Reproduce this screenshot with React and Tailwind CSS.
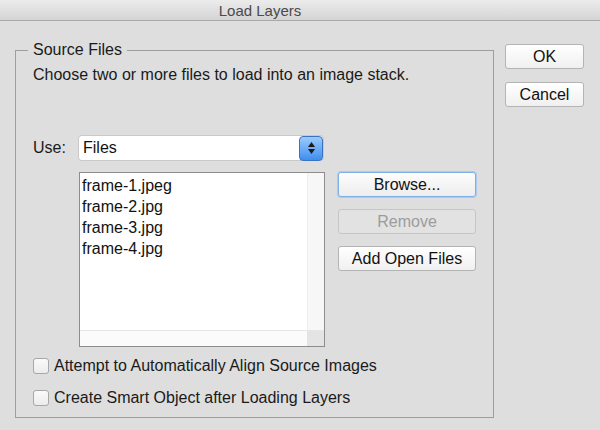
import React from "react";

const font = { fontFamily: '"Liberation Sans", Arial, sans-serif' };

function MacButton({ children, className = "", disabled, focused }) {
  return (
    <div
      className={`flex items-center justify-center h-[25px] rounded-[3px] border text-[16px] leading-none ${
        focused
          ? "border-[#7fb0ea] shadow-[0_0_0_1px_#a9cbf3] bg-gradient-to-b from-[#fdfdfd] to-[#ededed] text-[#111]"
          : disabled
          ? "border-[#c6c6c6] bg-[#e2e2e2] text-[#9c9c9c]"
          : "border-[#b4b4b4] bg-gradient-to-b from-[#ffffff] to-[#f0f0f0] text-[#111]"
      } ${className}`}
    >
      {children}
    </div>
  );
}

function Checkbox({ label }) {
  return (
    <div className="flex items-center gap-[5px] h-[18px]">
      <div className="w-[16px] h-[16px] rounded-[3px] border border-[#a8a8a8] bg-gradient-to-b from-[#fafafa] to-[#ececec]" />
      <span className="text-[16px] leading-[18px] text-[#1a1a1a]">{label}</span>
    </div>
  );
}

export default function App() {
  const files = ["frame-1.jpeg", "frame-2.jpg", "frame-3.jpg", "frame-4.jpg"];
  return (
    <div className="w-[600px] h-[430px] bg-[#dedede] flex flex-col overflow-hidden" style={font}>
      <div className="h-[21px] shrink-0 bg-gradient-to-b from-[#ececec] to-[#d4d4d4] border-b border-[#a9a9a9] flex items-center justify-center pr-[80px]">
        <span className="text-[15px] text-[#4a4a4a] leading-none">Load Layers</span>
      </div>

      <div className="flex">
        <div className="relative ml-[15px] mt-[29px] w-[479px] h-[368px] border border-[#9e9e9e] pl-[17px] pr-[17px]">
          <span className="absolute left-[12px] -top-[10px] px-[5px] bg-[#dedede] text-[16px] text-[#1a1a1a] leading-[18px]">
            Source Files
          </span>
          <div className="text-[16px] text-[#1a1a1a] mt-[15px] leading-[18px]">
            Choose two or more files to load into an image stack.
          </div>

          <div className="flex items-center mt-[52px]">
            <span className="w-[46px] text-[16px] text-[#1a1a1a]">Use:</span>
            <div className="flex items-center h-[24px] w-[244px] bg-white rounded-[3px] shadow-[0_0_0_1px_#c9c9c9]">
              <span className="flex-1 pl-[4px] text-[16px] text-[#111] leading-none">Files</span>
              <div className="w-[24px] h-[25px] rounded-[4px] bg-gradient-to-b from-[#9ccaf9] to-[#3d8ef0] border border-[#3a72c4] flex flex-col items-center justify-center gap-[2px]">
                <svg width="7" height="5" viewBox="0 0 7 5"><path d="M3.5 0 L7 5 L0 5 Z" fill="#1b1b1b" /></svg>
                <svg width="7" height="5" viewBox="0 0 7 5"><path d="M0 0 L7 0 L3.5 5 Z" fill="#1b1b1b" /></svg>
              </div>
            </div>
          </div>

          <div className="flex mt-[12px]">
            <div className="ml-[46px] w-[246px] h-[175px] border border-[#8d8d8d] bg-white flex flex-col">
              <div className="flex flex-1">
                <div className="flex-1 pl-[2px] pt-[2px]">
                  {files.map((f) => (
                    <div key={f} className="h-[21px] text-[16px] text-[#111] leading-[21px]">{f}</div>
                  ))}
                </div>
                <div className="w-[17px] bg-[#f7f7f7] border-l border-[#efefef]" />
              </div>
              <div className="h-[16px] flex border-t border-[#e6e6e6]">
                <div className="flex-1 bg-[#fbfbfb]" />
                <div className="w-[17px] bg-[#e4e4e4]" />
              </div>
            </div>

            <div className="ml-[13px] flex flex-col gap-[12px]">
              <MacButton focused className="w-[138px]">Browse...</MacButton>
              <MacButton disabled className="w-[138px]">Remove</MacButton>
              <MacButton className="w-[138px]">Add Open Files</MacButton>
            </div>
          </div>

          <div className="flex flex-col gap-[14px] mt-[10px]">
            <Checkbox label="Attempt to Automatically Align Source Images" />
            <Checkbox label="Create Smart Object after Loading Layers" />
          </div>
        </div>

        <div className="ml-[11px] mt-[23px] flex flex-col gap-[13px]">
          <MacButton className="w-[79px] h-[24px]">OK</MacButton>
          <MacButton className="w-[79px] h-[24px]">Cancel</MacButton>
        </div>
      </div>
    </div>
  );
}
